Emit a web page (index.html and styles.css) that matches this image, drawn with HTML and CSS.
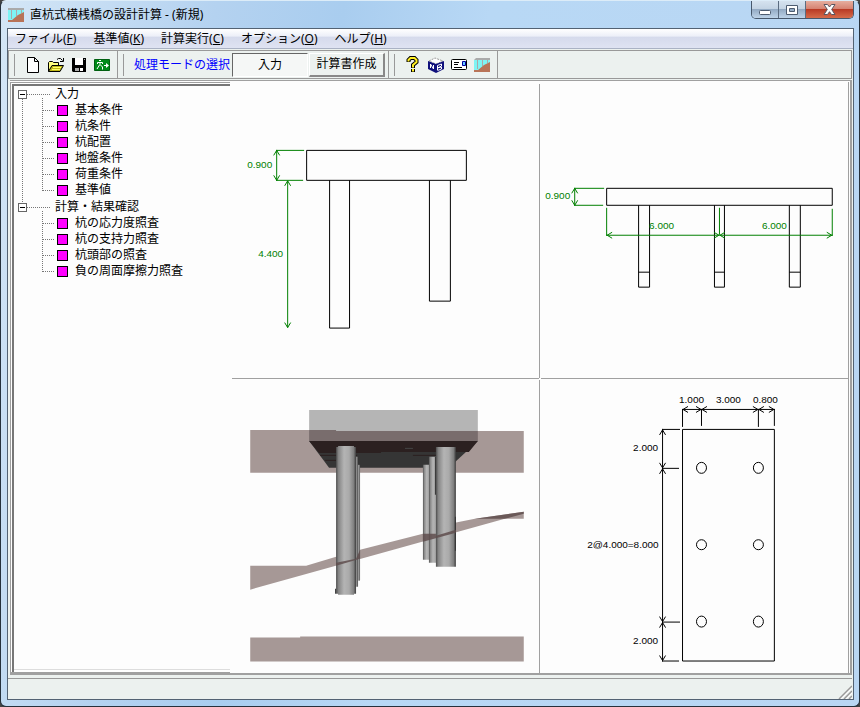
FILE: index.html
```html
<!DOCTYPE html>
<html lang="ja">
<head>
<meta charset="utf-8">
<title>直杭式横桟橋の設計計算 - (新規)</title>
<link rel="stylesheet" href="styles.css">
</head>
<body>
<div class="window">
  <header class="titlebar">
    <svg class="app-icon" width="16" height="14" viewBox="0 0 16 14">
      <path fill="#7ef4f4" d="M0 2h16v12H0z"/><path fill="#aaa" d="M0 0h16v2H0z"/>
      <path fill="#b87458" d="M0 14v-2h4l6-5 6-3v10z"/>
      <path fill="none" stroke="#aaa" d="M3.500 1v10M8.500 1v7M13.500 1v4"/>
    </svg>
    <h1 class="caption">直杭式横桟橋の設計計算 - (新規)</h1>
    <div class="window-buttons">
      <button class="win-btn min" aria-label="最小化"><svg width="12" height="5"><rect x=".5" y=".5" width="11" height="4" rx="1" fill="#fff" stroke="#4d5c70"/></svg></button>
      <button class="win-btn max" aria-label="最大化"><svg width="12" height="10"><path fill="#fff" fill-rule="evenodd" stroke="#4d5c70" d="M.5.5h11v9H.5zM3.500 3.500v3h5v-3z"/></svg></button>
      <button class="win-btn close" aria-label="閉じる"><svg width="13" height="11" viewBox="0 0 13 11"><path fill="#fff" stroke="#5a5560" d="M1 .5h3.500l2 2.500 2-2.500H12L8.700 5.500 12 10.500H8.500l-2-2.800-2 2.800H1l3.300-5z"/></svg></button>
    </div>
  </header>
  <div class="client">
    <nav class="menubar">
      <button>ファイル(<u>F</u>)</button>
      <button>基準値(<u>K</u>)</button>
      <button>計算実行(<u>C</u>)</button>
      <button>オプション(<u>O</u>)</button>
      <button>ヘルプ(<u>H</u>)</button>
    </nav>
    <div class="toolbar">
      <div class="band">
        <button class="tool" aria-label="新規"><svg width="14" height="16"><path fill="#fff" stroke="#000" d="M1.500.5h7l4 4v11h-11zM8.500.5v4h4"/></svg></button>
        <button class="tool" aria-label="開く"><svg width="16" height="16"><path fill="#ffff80" stroke="#000" d="M.5 14.500v-9l1-1h3l1 1h5v3"/><path fill="#c0b818" stroke="#000" d="M.5 14.500l3.500-6h11.500l-3.500 6z"/><path fill="none" stroke="#000" d="M9 2.500l1.500-1h2l2 2M15.500 1v3.500H12"/><path stroke="#ff6" d="M5 10.500h8M4 12.500h8"/></svg></button>
        <button class="tool" aria-label="保存"><svg width="16" height="16"><path d="M1 1h14v14H2l-1-1z"/><path fill="#fff" d="M4 1h8v7H4zM9 11h3v3H9z"/><path fill="#aaa" d="M13 2h1v1h-1zM4 11h4v3H4z"/></svg></button>
        <button class="tool" aria-label="終了"><svg width="16" height="12"><path fill="#008a18" stroke="#006010" d="M.5.5h15v11H.5z"/><path fill="none" stroke="#fff" d="M5 1.500h2M3.500 5V3.500h5V5M6 3v3M5.500 6L3 10M6.500 6l2 2v2.500M10 6.500h4"/><path fill="#fff" d="M12 4l3 2.500L12 9z"/></svg></button>
      </div>
      <div class="band mode">
        <span class="mode-label">処理モードの選択</span>
        <button class="mode-btn pressed">入力</button>
        <button class="mode-btn">計算書作成</button>
      </div>
      <div class="band last">
        <button class="tool" aria-label="ヘルプ"><svg width="14" height="17"><path fill="none" stroke="#000" stroke-width="4" d="M2.500 6V4l2-2h4l2 2v2L7 9v3M7 13v3"/><path fill="none" stroke="#fe2" stroke-width="2" d="M2.500 5.500V4l2-2h4l2 2v2L7 9v2.500M7 13v2.500"/></svg></button>
        <button class="tool" aria-label="目次"><svg width="16" height="16"><path fill="#fff" stroke="#999" stroke-dasharray="2 1" d="M1 4l6-3 8 3-7 3z"/><path fill="#10107c" d="M0 4l8 3 8-3v8l-8 4-8-4z"/><path fill="none" stroke="#fff" d="M2.500 11V7l3 5V8M9.500 13V8.500l4-1.500v2l-4 2 4-1v2l-4 1.500"/></svg></button>
        <button class="tool" aria-label="問い合わせ"><svg width="16" height="12"><rect x=".5" y=".5" width="15" height="10" rx="1" fill="#fff" stroke="#000"/><path stroke="#000" d="M3 3.500h5M3 5.500h4M3 8.500h8"/><path fill="#6cf" stroke="#0000a0" d="M11.500 2.500h3v4h-3z"/></svg></button>
        <button class="tool" aria-label="桟橋"><svg width="16" height="14"><path fill="#7ef4f4" d="M0 2h16v12H0z"/><path fill="#aaa" d="M2 0h14v2H0z"/><path fill="#b87458" d="M0 14v-2h4l6-5 6-3v10z"/><path fill="none" stroke="#aaa" d="M3.500 1v10M8.500 1v7M13.500 1v4"/></svg></button>
      </div>
    </div>
    <main class="main">
      <aside class="tree-panel">
        <ul class="tree">
          <li class="group"><div class="root"><button class="expander" aria-label="折りたたむ"></button><span>入力</span></div>
            <ul class="leaves">
              <li>基本条件</li><li>杭条件</li><li>杭配置</li><li>地盤条件</li><li>荷重条件</li><li>基準値</li>
            </ul>
          </li>
          <li class="group"><div class="root"><button class="expander" aria-label="折りたたむ"></button><span>計算・結果確認</span></div>
            <ul class="leaves">
              <li>杭の応力度照査</li><li>杭の支持力照査</li><li>杭頭部の照査</li><li>負の周面摩擦力照査</li>
            </ul>
          </li>
        </ul>
      </aside>
      <section class="views">
        <svg class="view drawing" viewBox="232 84 307 294">
          <g class="line"><path d="M306.500 150.500h160v30h-160zM329.500 180.500v148h20v-148M429.500 180.500v121h21v-121"/></g>
          <g class="dim"><path d="M276 150.500h28M276 180.500h27M276.500 150v31M273.500 155.500l3-5 3 5M273.500 175.500l3 5 3-5M287.500 181v147M284.500 186l3-5 3 5M284.500 323l3 5 3-5"/></g>
          <g class="dim-text"><text x="247" y="168">0.900</text><text x="258" y="257">4.400</text></g>
        </svg>
        <svg class="view drawing" viewBox="541 84 307 294">
          <g class="line"><path d="M606.500 188.500h226v17h-226zM638.500 205.500v82h11v-82M638.500 272.500h11M714.500 205.500v82h10v-82M714.500 272.500h10M789.500 205.500v82h11v-82M789.500 272.500h11"/></g>
          <g class="dim"><path d="M574 188.500h30M574 205.500h29M574.500 188v18M571.500 193.500l3-5 3 5M571.500 200.500l3 5 3-5M606.500 208v28M832.500 209v27M719.500 208v27M606 235.500h227M612 232.500l-5 3 5 3M714 232.500l5 3-5 3M725 232.500l-5 3 5 3M827 232.500l5 3-5 3"/></g>
          <g class="dim-text"><text x="545" y="199">0.900</text><text x="649" y="229">6.000</text><text x="762" y="229">6.000</text></g>
        </svg>
        <svg class="view" viewBox="232 380 307 294">
          <defs>
            <linearGradient id="pile"><stop offset="0" stop-color="#4c4c4c"/><stop offset=".12" stop-color="#858585"/><stop offset=".4" stop-color="#b4b4b4"/><stop offset=".65" stop-color="#aaa"/><stop offset=".88" stop-color="#808080"/><stop offset="1" stop-color="#3c3c3c"/></linearGradient>
          </defs>
          <path fill="#a69896" d="M250 430h74v1h200v42H250z"/>
          <path fill="#b5b5b5" d="M309 410h169v21H309z"/>
          <path fill="#796d6d" d="M309 430h27v1h142v10H309z"/>
          <path fill="#353535" d="M309 441h169l-29 27H329z"/>
          <path fill="#2b2020" d="M309 441h169l-9 11h-88v1h-62z"/>
          <path stroke="#2b2020" d="M320 455.500h37M325 460.500h11M413 455.500h42"/>
          <path stroke="#444" d="M405 448.500h8"/>
          <path fill="#a69896" d="M250 566h56l30-9 24-7 63-16 32-11 20-4 49-7v7h-19L250 590z"/>
          <g fill="url(#pile)"><path d="M354 465h6v116h-6z"/><path d="M350 457h8v130h-8z"/><path d="M423 465h9v95h-9z"/><path d="M429 457h10v106h-10z"/><path d="M336 447h2v-1h16v1h2v147h-2v1h-16v-1h-2z"/><path d="M436 447h20v120h-20z"/></g>
          <path fill="#333" d="M435 457h1v38h-1zM455 517h1v34h-1zM335 589h1v5h-1z"/>
          <path fill="#5f4d4d" fill-opacity=".85" d="M336 563l20-4 4-9v9l-24 7zM423 534h13v2l20-6v3l-33 9zM475 519l49-7v2l-19 5z"/>
          <path fill="#a69896" d="M250 638h50v-1h224v25H250z"/>
        </svg>
        <svg class="view drawing" viewBox="541 380 307 294">
          <g class="line"><path d="M682.500 429.500h92v232h-92zM682.500 409v18M701.500 409v17M758.500 409v18M774.500 409v17M682 409.500h93M688 406.500l-5 3 5 3M696 406.500l5 3-5 3M707 406.500l-5 3 5 3M753 406.500l5 3-5 3M764 406.500l-5 3 5 3M769 406.500l5 3-5 3M662.500 429v233M662 429.500h18M662 468.500h17M662 622.500h18M662 661.500h17M659.500 435l3-5 3 5M659.500 463l3 5 3-5M659.500 474l3-5 3 5M659.500 617l3 5 3-5M659.500 628l3-5 3 5M659.500 656l3 5 3-5"/>
          <ellipse cx="701.500" cy="468" rx="5" ry="5.500"/><ellipse cx="758.500" cy="468" rx="5" ry="5.500"/><circle cx="701.500" cy="545" r="5"/><circle cx="758.500" cy="545" r="5"/><ellipse cx="701.500" cy="622" rx="5" ry="5.500"/><ellipse cx="758.500" cy="622" rx="5" ry="5.500"/></g>
          <g class="plan-text"><text x="679" y="403">1.000</text><text x="716" y="403">3.000</text><text x="753" y="403">0.800</text><text x="633" y="451">2.000</text><text x="587" y="548">2@4.000=8.000</text><text x="633" y="644">2.000</text></g>
        </svg>
      </section>
    </main>
    <footer class="statusbar">
      <svg width="14" height="14"><path fill="none" stroke="#fff" stroke-width="2" d="M2 14L14 2M7 14l7-7M12 14l2-2"/><path fill="none" stroke="#999" stroke-width="1.500" d="M1 14L14 1M6 14l8-8M11 14l3-3"/></svg>
    </footer>
  </div>
</div>
</body>
</html>
```
FILE: styles.css
```css
* { box-sizing: border-box; }

body {
  margin: 0;
  background: #444;
  color: #000;
  font: 12px/16px "Noto Sans", "Noto Sans CJK JP", sans-serif;
}

button {
  margin: 0;
  padding: 0;
  border: 0;
  background: none;
  color: inherit;
  font: inherit;
}

svg { display: block; }
ul { margin: 0; padding: 0; list-style: none; }

.window {
  display: flex;
  flex-direction: column;
  height: 100vh;
  padding: 0 5px 6px 6px;
  border: 1px solid #26313c;
  border-top-color: #dcecf8;
  border-radius: 6px;
  background: linear-gradient(100deg, #d4e6f6 0, #b4d2f0 22%, #a9cdef 35%, #b8d8f5 50%, #b9d6f3 100%);
}

.titlebar {
  display: flex;
  align-items: center;
  flex: 0 0 27px;
  gap: 6px;
  padding-left: 1px;
}

.caption { flex: 1; margin: 0; font-size: 12px; font-weight: 400; }

.window-buttons {
  display: flex;
  align-self: flex-start;
  height: 18px;
  border: 1px solid #47586c;
  border-top: 0;
  border-radius: 0 0 5px 5px;
  overflow: hidden;
}

.win-btn {
  display: flex;
  align-items: center;
  justify-content: center;
  width: 27px;
  border-right: 1px solid #5b6c80;
  background: linear-gradient(#d5e2ef 0, #c3d3e3 48%, #94abc4 50%, #bdd3e8 100%);
}
.win-btn.min { align-items: flex-end; padding-bottom: 3px; }
.win-btn.close {
  width: 47px;
  border-right: 0;
  background: linear-gradient(#e6ae9f 0, #d68372 45%, #b93b25 50%, #d66b4a 100%);
}

.client {
  display: flex;
  flex: 1;
  flex-direction: column;
  min-height: 0;
  border: 1px solid #536273;
  background: #ecf1ef;
}

.menubar {
  display: flex;
  align-items: center;
  flex: 0 0 20px;
  gap: 17px;
  padding-left: 7px;
  border-bottom: 1px solid #aab2c4;
  background: linear-gradient(#fff 0, #eceff8 38%, #d5daec 42%, #dfe3f2 100%);
}

.toolbar {
  display: flex;
  flex: 0 0 29px;
  margin: 1px 1px 1px 0;
  border: 1px solid #999;
}

.band {
  display: flex;
  align-items: center;
  gap: 7px;
  padding: 0 7px 0 16px;
  border-right: 1px solid #999;
  background: linear-gradient(#999, #999) 5px 50% / 1px 22px no-repeat;
}

.mode { gap: 1px; padding: 0 3px 0 16px; }
.last { padding-left: 16px; }
.tool { display: flex; align-items: center; justify-content: center; width: 16px; height: 20px; }
.mode-label { margin-right: 1px; color: #00f; }

.mode-btn {
  width: 76px;
  height: 24px;
  border: 1px solid #fff;
  border-right: 2px solid #888;
  border-bottom: 2px solid #888;
}
.mode-btn.pressed {
  border: 1px solid #fff;
  border-top-color: #666;
  border-left-color: #666;
  background: #f5f7f6;
}

.main {
  display: flex;
  flex: 1;
  min-height: 0;
  margin: 0 1px 0 2px;
  padding: 1px 1px 0 0;
  border: solid #a0a0a0;
  border-width: 1px 2px 2px 0;
  background: #fdfdfd;
}

.tree-panel {
  flex: 0 0 220px;
  padding: 3px 0 0 4px;
  border: solid #a0a0a0;
  border-width: 1px 0 1px 1px;
  box-shadow: inset 1px 1px #fff, inset 3px 3px #777, inset 0 -2px #fff, inset 0 -3px #ddd;
}

.tree { position: relative; }
.tree::before {
  position: absolute;
  top: 12px;
  left: 7px;
  height: 108px;
  border-left: 1px dotted #777;
  content: "";
}

.root {
  display: flex;
  align-items: center;
  height: 16px;
  padding-left: 3px;
}
.root::before {
  order: 1;
  width: 23px;
  margin-right: 5px;
  border-top: 1px dotted #777;
  content: "";
}
.root span { order: 2; }

.expander {
  position: relative;
  width: 9px;
  height: 9px;
  border: 1px solid #666;
  background: linear-gradient(#000, #000) center / 5px 1px no-repeat #fff;
}

.leaves { position: relative; margin-bottom: 1px; padding-left: 27px; }
.leaves::before {
  position: absolute;
  top: -4px;
  bottom: 7px;
  left: 27px;
  border-left: 1px dotted #777;
  content: "";
}
.leaves li {
  display: flex;
  align-items: center;
  height: 16px;
  background:
    linear-gradient(#f0f, #f0f) 16px 4px / 9px 9px no-repeat,
    linear-gradient(#000, #000) 15px 3px / 11px 11px no-repeat;
}
.leaves li::before {
  width: 12px;
  margin-right: 21px;
  border-top: 1px dotted #777;
  content: "";
}

.views {
  display: grid;
  flex: 1;
  grid-template: 1fr 1fr / 1fr 1fr;
  gap: 2px;
  min-width: 0;
  margin-left: 2px;
  padding-top: 2px;
  border-right: 1px solid #a0a0a0;
}

.view {
  width: 100%;
  height: 100%;
  min-width: 0;
  min-height: 0;
  background: #fdfdfd;
  overflow: visible;
}
.view:nth-child(odd) { box-shadow: 1px 0 #a0a0a0; }
.view:nth-child(1) { box-shadow: 1px 0 #a0a0a0, 0 1px #a0a0a0; }
.view:nth-child(2) { box-shadow: 0 1px #a0a0a0; }

.line { fill: none; stroke: #000; }
.dim { fill: none; stroke: #008000; }
.drawing text { font: 10px "Liberation Sans", sans-serif; }
.dim-text { fill: #008000; }
.plan-text { fill: #000; }

.statusbar {
  display: flex;
  align-items: flex-end;
  justify-content: flex-end;
  flex: 0 0 21px;
  margin: 3px 1px 0 0;
  border-top: 1px solid #999;
}
```
